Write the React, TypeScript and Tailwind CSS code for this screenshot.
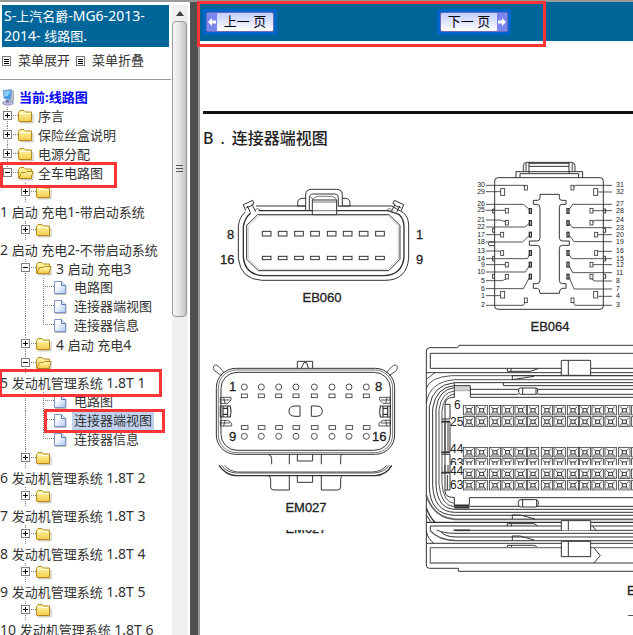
type Guide = 'blank' | 'line' | 'tee' | 'end' | 'plus' | 'minus';

interface TreeRow {
  guides: Guide[];
  icon: 'folder' | 'open' | 'file';
  label: string;
  // long labels drop under their folder
  wrap?: boolean;
  mark?: 'row' | 'wrap' | 'leaf';
}

const pages = (mark: boolean): TreeRow[] => [
  { guides: ['blank', 'line', 'tee'], icon: 'file', label: '电路图' },
  { guides: ['blank', 'line', 'tee'], icon: 'file', label: '连接器端视图', mark: mark ? 'leaf' : undefined },
  { guides: ['blank', 'line', 'end'], icon: 'file', label: '连接器信息' },
];

const closed = (label: string, wrap = true): TreeRow => ({
  guides: ['blank', 'plus'],
  icon: 'folder',
  label,
  wrap,
});

const rows: TreeRow[] = [
  { guides: ['plus'], icon: 'folder', label: '序言' },
  { guides: ['plus'], icon: 'folder', label: '保险丝盒说明' },
  { guides: ['plus'], icon: 'folder', label: '电源分配' },
  { guides: ['minus'], icon: 'open', label: '全车电路图', mark: 'row' },
  closed('1 启动 充电1-带启动系统'),
  closed('2 启动 充电2-不带启动系统'),
  { guides: ['blank', 'minus'], icon: 'open', label: '3 启动 充电3' },
  ...pages(false),
  closed('4 启动 充电4', false),
  { guides: ['blank', 'minus'], icon: 'open', label: '5 发动机管理系统 1.8T 1', wrap: true, mark: 'wrap' },
  ...pages(true),
  closed('6 发动机管理系统 1.8T 2'),
  closed('7 发动机管理系统 1.8T 3'),
  closed('8 发动机管理系统 1.8T 4'),
  closed('9 发动机管理系统 1.8T 5'),
  closed('10 发动机管理系统 1.8T 6'),
];

// Latin runs are set one size up so they sit level with the Chinese characters
function Mixed({ text }: { text: string }) {
  return (
    <>
      {text.split(/([\x20-\x7e]+)/).map((run, i) =>
        i % 2 ? (
          <span key={i} className="text-[14px]">
            {run}
          </span>
        ) : (
          run
        ),
      )}
    </>
  );
}

function GuideCell({ type, first }: { type: Guide; first?: boolean }) {
  const box = type === 'plus' || type === 'minus';
  const lines = (
    <svg width="18" height="19" viewBox="0 0 18 19" className="block shrink-0" shapeRendering="crispEdges">
      <g stroke="#808080" strokeDasharray="1 1" fill="none">
        {type !== 'blank' && (
          <path d={type === 'end' || (type === 'minus' && first) ? 'M7.5 0V9' : 'M7.5 0V19'} />
        )}
        {type !== 'blank' && type !== 'line' && <path d="M7 8.5H18" />}
      </g>
      {box && (
        <>
          <rect x="3.5" y="4.5" width="8" height="8" fill="#fff" stroke="#808080" />
          <path d={type === 'plus' ? 'M5 8.5h5M7.5 6v5' : 'M5 8.5h5'} stroke="#000" />
        </>
      )}
    </svg>
  );
  if (!box) return lines;
  return (
    <button type="button" aria-label={type === 'plus' ? '展开' : '折叠'} className="shrink-0">
      {lines}
    </button>
  );
}

function RowIcon({ type }: { type: TreeRow['icon'] }) {
  if (type === 'file') {
    return (
      <svg width="18" height="19" viewBox="0 0 18 19" className="shrink-0">
        <defs>
          <linearGradient id="paper" x1="0" y1="0" x2="1" y2="1">
            <stop offset="0.3" stopColor="#fff" />
            <stop offset="1" stopColor="#a9c8f5" />
          </linearGradient>
        </defs>
        <path d="M1 16.5h11V7" fill="none" stroke="#bbb" />
        <path d="M.5 3.5h7l4 4v8H.5z" fill="url(#paper)" stroke="#7f95c9" />
        <path d="M7.500 3.500v4h4" fill="#dce8fb" stroke="#5b76b8" />
      </svg>
    );
  }
  return (
    <svg width="18" height="19" viewBox="0 0 18 19" className="shrink-0">
      <defs>
        <linearGradient id="folder" x1="0" y1="0" x2="0" y2="1">
          <stop offset="0" stopColor="#fffbb0" />
          <stop offset="1" stopColor="#f5cb4a" />
        </linearGradient>
      </defs>
      <path d="M2 15.800h13V7" fill="none" stroke="#bdb7a5" />
      <path d="M.5 14V5.500l1.500-2h4l1.500 1.500h6v9.500H1z" fill="url(#folder)" stroke="#b58a1c" />
      {type === 'folder' ? (
        <path d="M1.500 6.500h11.500" stroke="#fffde0" />
      ) : (
        <path d="M1 14.500L3.500 8.500h4l1-1H15l-2 7z" fill="url(#folder)" stroke="#b58a1c" />
      )}
    </svg>
  );
}

function TreeItem({ row }: { row: TreeRow }) {
  return (
    <li>
      <div className="relative flex h-[19px] items-center">
        {row.guides.map((g, i) => (
          <GuideCell key={i} type={g} first={i === 0} />
        ))}
        <RowIcon type={row.icon} />
        {!row.wrap && (
          <a href="#" className={row.mark === 'leaf' ? 'bg-[#c1d2ee] px-0.5' : 'px-0.5'}>
            <Mixed text={row.label} />
          </a>
        )}
        {row.mark === 'row' && (
          <span className="absolute -top-0.5 left-0 z-10 h-[26px] w-[117px] border-3 border-[#fb3535]" />
        )}
        {row.mark === 'leaf' && (
          <span className="absolute -top-0.5 left-11 z-10 h-6 w-[121px] border-3 border-[#fb3535]" />
        )}
      </div>
      {row.wrap && (
        <div className="relative flex h-[19px] items-center">
          <a href="#">
            <Mixed text={row.label} />
          </a>
          {row.mark === 'wrap' && (
            <span className="absolute -top-1 left-0 z-10 h-7 w-[162px] border-3 border-l-2 border-[#fb3535]" />
          )}
        </div>
      )}
    </li>
  );
}

function MenuButton({ label }: { label: string }) {
  return (
    <button type="button" className="flex items-center gap-[7px]">
      <svg width="9" height="10" viewBox="0 0 9 10" shapeRendering="crispEdges">
        <rect x=".5" y=".5" width="8" height="9" fill="#fff" stroke="#777" />
        <path d="M2 3h5M2 5h5M2 7h5" stroke="#000" />
      </svg>
      {label}
    </button>
  );
}

function Sidebar() {
  return (
    <aside className="flex w-[190px] shrink-0 overflow-hidden bg-white pt-[3px] text-[13px] leading-[19px] whitespace-nowrap text-[#333]">
      <div className="w-[172px] shrink-0">
        <h1 className="mr-[3px] ml-0.5 bg-[#006699] px-0.5 py-px leading-5 whitespace-normal text-white">
          <Mixed text="S-上汽名爵-MG6-2013-2014- 线路图." />
        </h1>
        <div className="flex gap-1.5 py-1 pl-0.5">
          <MenuButton label="菜单展开" />
          <MenuButton label="菜单折叠" />
        </div>
        <hr className="mt-[5px] mr-px mb-2 border-[#999]" />
        <div className="flex h-[19px] items-center gap-0.5 font-bold text-[#0000ff]">
          <svg width="17" height="19" viewBox="0 0 17 19">
            <path d="M11.500 2.500l2 .5v10l-3 1z" fill="#bcc3cf" stroke="#8a92a3" strokeWidth=".6" />
            <path d="M3 2.500l8.500-1-1 10.500-6.500-1.500z" fill="#3f9be8" stroke="#8ba9cc" strokeWidth=".8" />
            <path d="M4 3.500l6.500-.8-2.500 5-3.500 1z" fill="#8cd0fa" />
            <ellipse cx="8" cy="15" rx="5.500" ry="2.200" fill="#b9bddb" stroke="#7f84ae" strokeWidth=".7" />
            <path d="M6 11.500l3 .7v2.500H6z" fill="#787ea8" />
          </svg>
          当前:线路图
        </div>
        <ul>
          {rows.map((row, i) => (
            <TreeItem key={i} row={row} />
          ))}
        </ul>
      </div>
      <div className="flex w-4 shrink-0 flex-col bg-[#f0f0f0]">
        <div className="flex h-4 items-center justify-center">
          <svg width="8" height="5" viewBox="0 0 8 5">
            <path d="M4 0l4 5H0z" fill="#404040" />
          </svg>
        </div>
        <div className="mr-px flex h-[296px] items-center justify-center rounded-sm border border-[#999] bg-linear-to-r from-[#f7f7f7] via-[#e4e4e6] to-[#c0c0c6]">
          <svg width="7" height="8" viewBox="0 0 7 8" shapeRendering="crispEdges">
            <path d="M0 .5h7M0 3.500h7M0 6.500h7" stroke="#555" />
          </svg>
        </div>
      </div>
    </aside>
  );
}

function PageArrow({ flip }: { flip?: boolean }) {
  return (
    <span className="flex w-2.5 items-center justify-center bg-[#7b86f0]">
      <svg width="8" height="8" viewBox="0 0 8 8" className={flip ? 'rotate-180' : ''}>
        <path d="M0 4l4-4v2.500h4v3H4V8z" fill="#fff" />
      </svg>
    </span>
  );
}

function PageButton({ label, next }: { label: string; next?: boolean }) {
  return (
    <button type="button" className="h-[26px] border-3 border-[#0066cc] text-[13px] leading-4 text-black">
      <span className="flex h-full w-[68px] overflow-hidden rounded-xs border border-[#6a6ab8] bg-linear-to-b from-[#c3cdfb] via-[#dfe5ff] to-white">
        {!next && <PageArrow />}
        <span className="flex-1 text-center">{label}</span>
        {next && <PageArrow flip />}
      </span>
    </button>
  );
}

const mirror = (cx: number) => `translate(${cx * 2} 0) scale(-1 1)`;

// 16-pin connector, drawn on a grid of three units to the pixel
function ConnectorEB060() {
  const xs = [157, 205, 254, 302, 352, 400, 448, 497];
  const clip = (
    <>
      <path d="M107 92L100 74L128 61L132 71L126 73L137 95M112 78L121 97M108 84L127 76" strokeWidth="3" />
      <path d="M135 91Q142 80 152 92" strokeWidth="2" />
    </>
  );
  return (
    <g transform="translate(210 180) scale(.3333)">
      <path d="M138 78H545L580 98Q596 112 596 135V235Q590 301 525 301H155Q92 298 85 235V140Q87 112 106 96" />
      <path d="M146 92H535L568 104Q582 118 582 140V232Q576 285 522 287H160Q106 285 100 232V140Q102 118 122 98" strokeWidth="4" />
      <path d="M143 104H537L570 136V238L536 272H145L110 238V136Z" />
      <path d="M148 107H532L565 138V236L534 268H148L115 236V138Z" stroke="#999" strokeWidth="1.500" />
      <path d="M287 90V45Q287 28 304 28H380Q397 28 397 45V78" fill="#fff" />
      <path d="M298 92V55Q298 42 310 42H374Q385 42 385 55V78H397" />
      <path d="M287 55H276Q263 56 263 70V78H287M397 55H407Q420 56 420 70V78H397" />
      <path d="M307 60H380V104H307Z" fill="#fff" />
      <path d="M307 60Q312 50 325 49H365Q378 52 380 60M307 66H380M307 92H380M300 49L310 60" strokeWidth="2" />
      <g>{clip}</g>
      <g transform={mirror(340.5)}>{clip}</g>
      {xs.map((x) => (
        <g key={x}>
          <rect x={x} y="154" width="26" height="14" />
          <rect x={x} y="229" width="26" height="10" />
        </g>
      ))}
    </g>
  );
}

const leftLeads: [string, number, string][] = [
  ['30', 91, 'H193V97'],
  ['29', 110, 'H122'],
  ['26', 148, 'H190L208 163'],
  ['25', 166, 'H136'],
  ['21', 195, 'H120L136 200'],
  ['22', 216, 'H195L208 205'],
  ['17', 239, 'H122'],
  ['18', 261, 'H188L208 241'],
  ['13', 288, 'H118L122 292'],
  ['14', 311, 'H202L208 300'],
  ['9', 329, 'H136'],
  ['10', 351, 'H196L208 333'],
  ['5', 377, 'H128L138 371'],
  ['6', 401, 'H190L208 368'],
  ['1', 422, 'H122'],
  ['2', 451, 'H190L195 442'],
];

const rightLeads: [string, number, string][] = [
  ['31', 91, 'H346L341 97'],
  ['32', 111, 'H415'],
  ['27', 148, 'H338L328 163'],
  ['28', 167, 'H398'],
  ['24', 196, 'H405L398 202'],
  ['23', 218, 'H338L328 205'],
  ['20', 239, 'H414'],
  ['19', 260, 'H342L328 241'],
  ['16', 289, 'H414'],
  ['15', 311, 'H336L328 300'],
  ['12', 329, 'H398'],
  ['11', 353, 'H338L328 333'],
  ['8', 378, 'H402L395 370'],
  ['7', 402, 'H342L328 368'],
  ['4', 424, 'H415'],
  ['3', 451, 'H345L340 442'],
];

function ConnectorEB064() {
  const half = [
    [193, 91, 9, 14],
    [122, 101, 12, 20],
    [136, 160, 9, 14],
    [136, 196, 9, 14],
    [122, 232, 9, 14],
    [122, 287, 9, 14],
    [136, 322, 9, 14],
    [136, 358, 9, 14],
    [122, 409, 12, 20],
    [193, 429, 9, 14],
  ];
  const inner = [161, 197, 232, 287, 322, 358];
  const side = (
    <>
      {half.map(([x, y, w, h]) => (
        <rect key={`${x}-${y}`} x={x} y={y} width={w} height={h} strokeWidth="2.500" />
      ))}
      {inner.map((y) => (
        <rect key={y} x="208" y={y} width="6" height="14" strokeWidth="4" />
      ))}
      <path d="M104 162H98V174H104M104 220H98V232H104M104 304H98V318H104M104 358H98V370H104" />
    </>
  );
  return (
    <g transform="translate(460 155) scale(.3333)">
      <rect x="104" y="68" width="326" height="395" rx="10" />
      <path d="M168 68V50H368V68M180 68V56H356V68" />
      <path d="M190 50V32Q191 23 199 22H335Q344 23 345 32V50M207 56V22M327 56V22M207 34H327M207 25H327" />
      <path d="M198 24L198 48M337 24V48" stroke="#888" strokeWidth="5" />
      <path d="M240 118H298V128Q298 136 306 136H318V148H306Q298 148 298 158V250Q300 258 308 258H328V271H308Q298 271 298 280V376Q298 386 308 386H318V400H306Q298 402 298 415H240Q240 402 232 400H220V386H230Q240 386 240 376V280Q240 271 230 271H208V258H230Q240 258 240 250V158Q240 148 230 148H220V136H232Q240 136 240 128Z" />
      <path d="M104 261H88L85 266L88 272H104" />
      <g>{side}</g>
      <g transform={mirror(267.5)}>{side}</g>
      {leftLeads.map(([n, y, d]) => (
        <path key={n} d={`M78 ${y}${d}`} strokeWidth="2.500" />
      ))}
      {rightLeads.map(([n, y, d]) => (
        <path key={n} d={`M456 ${y}${d}`} strokeWidth="2.500" />
      ))}
    </g>
  );
}

function ConnectorEM027() {
  const xs = [118, 169, 221, 273, 328, 381, 432, 484];
  const side = (
    <>
      <path d="M50 77L28 62Q20 48 32 45Q39 44 57 68" strokeWidth="2.500" />
      <path d="M46 142H78V150L68 160H46ZM56 142L60 160M46 150H74M46 228H80V220L68 211H46ZM56 228L60 211M46 219H74" strokeWidth="2.500" />
      <path d="M46 168H76Q80 184 76 201H46ZM54 168V201M68 168V201M54 175H68M54 193H68" strokeWidth="3.500" />
    </>
  );
  return (
    <g transform="translate(205 350) scale(.3333)">
      <rect x="34" y="55" width="535" height="258" rx="58" strokeWidth="3" />
      <rect x="40" y="60" width="523" height="248" rx="54" strokeWidth="2" />
      <rect x="48" y="67" width="508" height="234" rx="48" strokeWidth="3" />
      <path d="M277 55V34H323V55M289 54L297 38H305L310 54" />
      <g>{side}</g>
      <g transform={mirror(301)}>{side}</g>
      {xs.map((x) => (
        <g key={x} strokeWidth="2.500">
          <circle cx={x} cy="111" r="9" />
          <rect x={x - 9} y="132" width="18" height="11" />
          <rect x={x - 9} y="227" width="20" height="11" />
          <circle cx={x} cy="259" r="9" />
        </g>
      ))}
      <path d="M285 168V199H270Q252 198 252 184Q252 168 270 168ZM319 168V199H334Q352 198 352 184Q352 168 334 168Z" />
      <path d="M190 313Q200 316 200 326V343M253 313V343M277 313V333H323V313M349 313V343M410 313Q407 316 407 326V343" />
      <path d="M42 346Q62 376 95 377H510Q545 375 560 346" strokeWidth="4" />
      <path d="M50 346Q65 368 95 369H505Q538 368 552 346M59 346Q72 364 98 366H502Q532 364 545 346" strokeWidth="2.500" />
      <path d="M190 378Q197 380 197 388V412Q198 420 206 420H253V378M277 378V397H323V378M349 378V420H398Q407 420 407 410V388Q407 380 412 378" />
    </g>
  );
}

const pinXs = [130, 168, 208, 246, 285, 322, 364, 402, 442, 478, 516, 555, 596, 635];

function PinRow({ y, h = 30 }: { y: number; h?: number }) {
  return (
    <svg x="120" y={y - 2} width="540" height={h + 3} viewBox={`120 ${y - 2} 540 ${h + 3}`}>
      {pinXs.map((x) => (
        <g key={x}>
          <rect x={x} y={y} width="34" height="29" strokeWidth="2.500" />
          <rect x={x + 11} y={y + 10} width="12" height="10" strokeWidth="3" />
          <path
            d={`M${x + 4} ${y + 4}l7 6M${x + 30} ${y + 4}l-7 6M${x + 4} ${y + 26}l7 -6M${x + 30} ${y + 26}l-7 -6`}
            strokeWidth="2.500"
          />
          <path d={`M${x + 5} ${y + 25}h24`} strokeWidth="2" stroke="#777" />
        </g>
      ))}
    </svg>
  );
}

function EcuConnector() {
  return (
    <g transform="translate(420 335) scale(.3333)">
      {/* housing */}
      <path d="M660 31H117L113 38H28Q19 40 19 48V690Q19 700 28 700H115V709H660" />
      <path d="M660 55H31V100H660M19 113H660M276 122H660" />
      <path d="M660 134H105Q28 140 19 205M660 122H95Q30 126 19 160M19 133L45 113" strokeWidth="2.500" />
      <path d="M660 143H103Q38 150 28 215V455Q30 540 105 541H660" />
      <path d="M660 152H250M250 143V152M150 152H103Q48 156 38 220V452Q42 530 103 532H660" />
      <path d="M103 158Q55 164 48 222V450Q52 520 103 523H660" />
      <path d="M103 168Q64 172 57 224V448Q62 512 103 515H148" strokeWidth="2.500" />
      <path d="M103 177Q72 180 66 226V446Q70 502 103 505" strokeWidth="2.500" />
      <path d="M103 143V187H95Q75 190 75 210V470Q77 486 95 487H103V515" />
      <path d="M103 156H151M103 162H151M103 167H151" stroke="#777" strokeWidth="2" />
      <path d="M660 163H151M151 152V187H660M151 178H295M353 178H660" />
      <rect x="296" y="159" width="57" height="19" rx="6" fill="#fff" />
      <path d="M308 159V178M348 159V178" />
      <path d="M262 100V109H330L355 101M273 100V109M277 122V134L342 124" />
      <path d="M424 76H512V121H424Z" fill="#fff" />
      <path d="M445 76V121" />

      {/* keyway on the left of the pins */}
      <path d="M75 208H90V252H66M66 260H90V352H66M75 260V352M84 260V352M66 358H90V413H66M75 390V413M84 390V413M90 413V465H75M82 420V465" />
      <path d="M64 260H90M64 352H90M64 413H90" strokeWidth="5" />

      <PinRow y={211} />
      <PinRow y={245} />
      <PinRow y={337} />
      <PinRow y={371} h={18} />
      <PinRow y={402} />
      <PinRow y={436} />

      {/* lower edge, repeated where the sheet was joined */}
      <path d="M148 510V488H660M148 514H660" />
      <path d="M103 511H148M103 518H148" strokeWidth="5" />
      <rect x="295" y="494" width="60" height="22" rx="8" fill="#fff" />
      <path d="M308 494V516M350 494V516" />
      <path d="M19 480Q40 548 105 553H660" stroke="#666" strokeWidth="5" />
      <path d="M19 518Q28 545 45 562M19 562H660" strokeWidth="4" />
      <path d="M277 552V540H300L345 552M262 574V566H340Q350 567 353 574M274 566V574" />
      <path d="M31 586V573H660M19 540L32 560M100 586H660M660 595H105Q70 595 50 585M660 606H110Q75 606 62 590" />
      <path d="M103 586H150" strokeWidth="5" />
      <path d="M30 586Q55 616 110 617H660" stroke="#555" strokeWidth="4" />
      <path d="M19 625H660M19 590Q24 612 42 625M277 616V603H300L345 616M262 639V631H340Q350 632 353 639M274 631V639" />
      <path d="M660 638H31V684H660" stroke="#777" strokeWidth="4" />
      <path d="M424 586V557H512V586" fill="#fff" />
      <path d="M424 619H512V665H424Z" fill="#fff" />
      <path d="M445 557V586M445 619V665M517 574L530 586M522 639L541 662L522 684" />
    </g>
  );
}

function ConnectorSheet() {
  return (
    <svg
      width="433"
      height="480"
      viewBox="200 155 433 480"
      className="block shrink-0 font-['Liberation_Sans',Arial,sans-serif]"
      role="img"
      aria-label="连接器端视图"
    >
      <defs>
        <clipPath id="captionFoot">
          <rect x="280" y="530" width="60" height="6" />
        </clipPath>
        <clipPath id="pinHead">
          <rect x="440" y="455" width="40" height="10" />
        </clipPath>
      </defs>
      <g fill="none" stroke="#333" strokeWidth="3">
        <ConnectorEB060 />
        <ConnectorEB064 />
        <ConnectorEM027 />
        <EcuConnector />
      </g>
      <g fill="#222" stroke="#222" strokeWidth=".3" fontSize="13">
        <text x="227" y="239">8</text>
        <text x="220" y="264">16</text>
        <text x="416" y="239">1</text>
        <text x="416" y="264">9</text>
        <text x="229" y="391">1</text>
        <text x="375" y="391">8</text>
        <text x="229" y="441">9</text>
        <text x="372" y="441">16</text>
        <g textAnchor="middle">
          <text x="322" y="302">EB060</text>
          <text x="550" y="331">EB064</text>
          <text x="306" y="512">EM027</text>
          <text x="306" y="533" clipPath="url(#captionFoot)">
            EM027
          </text>
        </g>
        <text x="627" y="595">E</text>
      </g>
      <g fill="#222" fontSize="12">
        <text x="454" y="409">6</text>
        <text x="450" y="426">25</text>
        <text x="450" y="453">44</text>
        <text x="450" y="467" clipPath="url(#pinHead)">
          63
        </text>
        <text x="450" y="475">44</text>
        <text x="450" y="489">63</text>
      </g>
      <g fill="#222" fontSize="7">
        {leftLeads.map(([n, y]) => (
          <text key={n} x="485" y={Math.round(155 + y / 3 + 2)} textAnchor="end">
            {n}
          </text>
        ))}
        {rightLeads.map(([n, y]) => (
          <text key={n} x="616" y={Math.round(155 + y / 3 + 2)}>
            {n}
          </text>
        ))}
      </g>
      <path d="M628 615.500h8" stroke="#555" />
    </svg>
  );
}

export default function App() {
  return (
    <div className="flex h-screen flex-col overflow-hidden border-t-2 border-[#999] bg-white font-['Noto_Sans','Noto_Sans_CJK_SC',sans-serif]">
      <div className="flex min-h-0 flex-1">
        <Sidebar />
        <div className="w-2 shrink-0 bg-[#505050]" />
        <main className="min-w-0 flex-1 overflow-hidden border-l-2 border-[#999] bg-white">
          <nav className="flex h-[39px] items-center gap-40 bg-[#006699] pl-[3px]">
            <PageButton label="上一 页" />
            <PageButton label="下一 页" next />
          </nav>
          <hr className="mt-[70px] ml-[3px] border-t-3 border-[#111]" />
          <h2 className="mt-3 flex h-[29px] gap-[7px] pl-[3px] text-base leading-6 font-medium text-[#222]">
            <span>B</span>
            <span>.</span>
            <span>连接器端视图</span>
          </h2>
          <ConnectorSheet />
        </main>
      </div>
      <span className="pointer-events-none absolute top-px left-[197px] z-20 h-[46px] w-[349px] border-3 border-[#fb3535]" />
    </div>
  );
}
